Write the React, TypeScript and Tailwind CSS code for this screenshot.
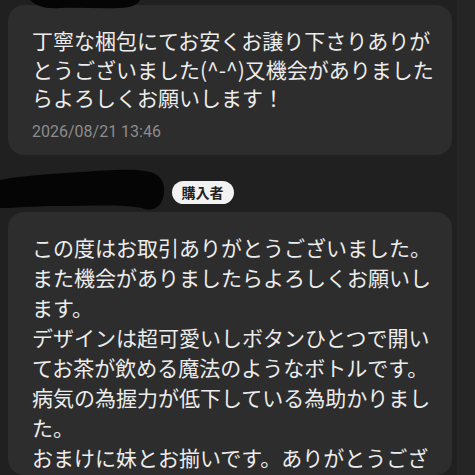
const font = {
  fontFamily: '"Noto Sans CJK JP", "Noto Sans", sans-serif',
};

function Redaction() {
  return (
    <>
      <svg
        className="absolute left-0 top-0"
        width="160"
        height="14"
        viewBox="0 0 160 14"
      >
        <path
          d="M30 0 H140 C138 4 132 8 120 8 C100 9 80 7 60 8 C45 9 36 6 30 0 Z"
          fill="#050505"
        />
      </svg>
      <svg
        className="absolute left-0 top-[166px]"
        width="175"
        height="50"
        viewBox="0 0 175 50"
      >
        <path
          d="M0 14 C20 10 50 8 80 6 C110 4 135 2 150 6 C164 10 166 22 163 32 C160 42 152 46 142 42 C120 38 90 40 60 40 C35 40 15 42 0 42 Z"
          fill="#050505"
        />
      </svg>
    </>
  );
}

function Bubble({ children, className }: { children: React.ReactNode; className?: string }) {
  return (
    <div className={`rounded-[16px] bg-[#2d2d2d] pl-[24px] pr-[16px] text-[#ececec] ${className ?? ""}`}>
      {children}
    </div>
  );
}

export default function App() {
  return (
    <div className="relative flex h-[475px] w-[475px] overflow-hidden bg-[#202020]" style={font}>
      <div className="flex w-[457px] flex-col pl-[8px] pr-[5px] pt-[5px]">
        <Bubble className="h-[150px] pt-[21px]">
          <p className="whitespace-nowrap text-[21px] leading-[28.5px]">
            丁寧な梱包にてお安くお譲り下さりありが
            <br />
            とうございました(^-^)又機会がありました
            <br />
            らよろしくお願いします！
          </p>
          <p
            className="mt-[10px] text-[16px] leading-[20px] text-[#8c8c8c]"
            style={{ fontFamily: '"Roboto", "Noto Sans", sans-serif' }}
          >
            2026/08/21 13:46
          </p>
        </Bubble>

        <div className="flex h-[57px] items-end justify-center pb-[8px] pr-[55px]">
          <span className="rounded-full bg-[#f2f2f2] px-[10px] text-[14px] font-bold leading-[23px] text-[#222]">
            購入者
          </span>
        </div>

        <Bubble className="flex-1 pt-[20px]">
          <p className="whitespace-nowrap text-[21px] leading-[30px]">
            この度はお取引ありがとうございました。
            <br />
            また機会がありましたらよろしくお願いし
            <br />
            ます。
            <br />
            デザインは超可愛いしボタンひとつで開い
            <br />
            てお茶が飲める魔法のようなボトルです。
            <br />
            病気の為握力が低下している為助かりまし
            <br />
            た。
            <br />
            おまけに妹とお揃いです。ありがとうござ
          </p>
        </Bubble>
      </div>
      <div className="flex-1 bg-[#252525]" />
      <Redaction />
    </div>
  );
}
